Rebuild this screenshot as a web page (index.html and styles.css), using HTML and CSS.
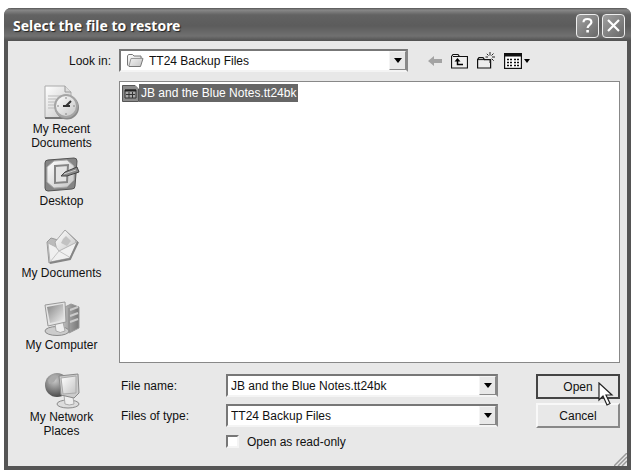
FILE: index.html
```html
<!DOCTYPE html>
<html lang="en">
<head>
  <meta charset="UTF-8">
  <meta name="viewport" content="width=device-width, initial-scale=1.0">
  <title>Select the file to restore</title>
  <link rel="stylesheet" href="styles.css">
</head>
<body>
  <svg class="defs" width="0" height="0" aria-hidden="true">
    <defs>
      <linearGradient id="light" x1="0" y1="0" x2="1" y2="1">
        <stop offset="0" stop-color="#fff"/>
        <stop offset="1" stop-color="#c4c4c4"/>
      </linearGradient>
      <linearGradient id="mid" x1="0" y1="0" x2="1" y2="1">
        <stop offset="0" stop-color="#858585"/>
        <stop offset="1" stop-color="#f0f0f0"/>
      </linearGradient>
      <linearGradient id="side" x1="0" y1="0" x2="1" y2="0">
        <stop offset="0" stop-color="#bbb"/>
        <stop offset="1" stop-color="#777"/>
      </linearGradient>
      <radialGradient id="ball" cx="0.4" cy="0.3" r="0.7">
        <stop offset="0" stop-color="#ccc"/>
        <stop offset="0.5" stop-color="#8c8c8c"/>
        <stop offset="1" stop-color="#4c4c4c"/>
      </radialGradient>
    </defs>
  </svg>

  <main class="dialog">
    <header class="title-bar">
      <h1 class="title">Select the file to restore</h1>
      <button class="title-button" type="button" aria-label="Help">
        <svg width="15" height="17" viewBox="0 0 15 17"><path d="M3.500 5.200C3.500 2.800 5 2 7.400 2s4 1.200 4 3.300c0 2.500-3.800 2.700-3.800 5.700" fill="none" stroke="#fff" stroke-width="2.200"/><rect x="6.300" y="13" width="2.600" height="2.500" fill="#fff"/></svg>
      </button>
      <button class="title-button" type="button" aria-label="Close">
        <svg width="15" height="15" viewBox="0 0 15 15"><path d="M2 2l11 11M13 2L2 13" stroke="#fff" stroke-width="2.200"/></svg>
      </button>
    </header>

    <form class="dialog-body">
      <label class="look-label" for="look-in">Look in:</label>
      <div class="look-row">
        <div class="combo look-combo">
          <svg class="combo-icon" width="18" height="15" viewBox="0 0 18 15"><path d="M1.500 12V3l1-1.500h4L8 3h7v2l2 .5-2.500 8H3z" fill="url(#light)" stroke="#777"/><path d="M3 13l2-7.500h11.500" fill="none" stroke="#999"/></svg>
          <select class="field with-icon" id="look-in">
            <option>TT24 Backup Files</option>
          </select>
          <span class="arrow-box"><svg width="8" height="5" viewBox="0 0 8 5"><path d="M0 0h8L4 5z"/></svg></span>
        </div>
        <div class="tools">
          <button class="tool" type="button" aria-label="Back">
            <svg width="14" height="12" viewBox="0 0 14 12"><path d="M0 6l6-5v3h8v4H6v3z" fill="#a3a3a3"/></svg>
          </button>
          <button class="tool" type="button" aria-label="Up one level">
            <svg width="17" height="16" viewBox="0 0 17 16"><path d="M.5 15V3.500L2 1.500h5l1.500 2h8V15z" fill="#eee" stroke="#111" stroke-width="1.200"/><path d="M2 3.500h6" stroke="#111"/><path d="M3.500 8.500L6.500 5l3 3.500z"/><path d="M6.500 8v3.500H12" fill="none" stroke="#000" stroke-width="1.500"/></svg>
          </button>
          <button class="tool" type="button" aria-label="Create new folder">
            <svg width="18" height="17" viewBox="0 0 18 17"><path d="M.6 16V7.500L2 5.600h4l1.500 2h6.100V16z" fill="#eee" stroke="#111" stroke-width="1.200"/><path d="M1 7.600h7" stroke="#111"/><path d="M13 0v3.500M13 7v4M8.500 5h2.500M15 5h3M9.800 1.800l1.700 1.700M16.500 1.500l-2 2M14.700 6.700l2 2" stroke="#222"/></svg>
          </button>
          <button class="tool" type="button" aria-label="Views">
            <svg width="26" height="16" viewBox="0 0 26 16"><rect x=".6" y=".6" width="16.800" height="14.800" fill="#fff" stroke="#111" stroke-width="1.200"/><path d="M0 2h18" stroke="#111" stroke-width="3"/><path d="M3 6.500h2M6 6.500h2M10 6.500h2M13 6.500h2M3 9.500h2M6 9.500h2M10 9.500h2M13 9.500h2M3 12.500h2M6 12.500h2M10 12.500h2M13 12.500h2" stroke="#111" stroke-width="1.500"/><path d="M20 6h6l-3 4z"/></svg>
          </button>
        </div>
      </div>

      <nav class="places">
        <button class="place" type="button">
          <svg width="36" height="36" viewBox="0 0 36 36"><path d="M1 1h20l6 6v26H1z" fill="url(#light)" stroke="#aaa"/><path d="M21 1v6h6" fill="#ddd" stroke="#999"/><path d="M4 11h13M4 14h8M4 17h7M4 20h6M4 23h7" stroke="#bbb"/><path d="M1 33h26" stroke="#777" stroke-width="2"/><circle cx="23" cy="22.500" r="12" fill="#8a8a8a"/><circle cx="22" cy="21" r="11" fill="url(#light)" stroke="#a5a5a5" stroke-width="2"/><path d="M22 21l5-5M19 21h7" stroke="#333" stroke-width="2"/><path d="M22 12v2M22 28v2M13 21h2M29 21h2" stroke="#888"/></svg>
          <span>My Recent<br>Documents</span>
        </button>
        <button class="place" type="button">
          <svg width="36" height="36" viewBox="0 0 36 36"><path d="M4 3l26-2q3 0 3 3l-2 25q0 3-3 3L4 34q-3 0-3-3L1 6q0-3 3-3z" fill="#858585" stroke="#555"/><path d="M10 4l13-1 7 6v14l-7 7-13 1-7-6V10z" fill="url(#light)" stroke="#aaa"/><path d="M11 9l13-1-1 17-12 1z" fill="#e4e4e4" stroke="#858585" stroke-width="2"/><path d="M17 19l4-4 12-5 2 5-12 4z" fill="#888" stroke="#444"/><path d="M20 17l12-4" stroke="#ccc"/></svg>
          <span>Desktop</span>
        </button>
        <button class="place" type="button">
          <svg width="36" height="36" viewBox="0 0 36 36"><path d="M3 13l4-4 7 2 7-10 13 12-8 17-21 4z" fill="#bbb" stroke="#999"/><path d="M11 13L21 1l11 11-3 9-15 5z" fill="url(#light)" stroke="#aaa"/><path d="M19 10l3-3 5 5-4 5-6-3z" fill="#c2c2c2"/><path d="M4 14l8 4 3 4 18-9-7 16-20 4z" fill="#f0f0f0" stroke="#b5b5b5"/><path d="M6 33l9-11 12 7" fill="none" stroke="#c4c4c4"/><path d="M6 34l20-4 8-17" fill="none" stroke="#858585" stroke-width="2"/></svg>
          <span>My Documents</span>
        </button>
        <button class="place" type="button">
          <svg width="36" height="36" viewBox="0 0 36 36"><path d="M21 6l6-3 8 3v21l-10 5-6-4z" fill="url(#side)" stroke="#999"/><path d="M26 9l8-3M26 15l8-3M26 21l8-3" stroke="#ccc" stroke-width="2"/><path d="M25 7v24" stroke="#888"/><ellipse cx="13" cy="30" rx="12" ry="4.500" fill="#ccc" stroke="#8a8a8a"/><path d="M11 22l8-1 2 9q-5 3-9 0z" fill="#eee" stroke="#aaa"/><path d="M1 4l20-3 1 20-18 4z" fill="#e4e4e4" stroke="#999"/><path d="M3 6l16-3 1 16-14 3z" fill="url(#mid)"/></svg>
          <span>My Computer</span>
        </button>
        <button class="place" type="button">
          <svg width="36" height="36" viewBox="0 0 36 36"><circle cx="13" cy="12" r="12" fill="url(#ball)"/><path d="M4 7q5-5 10-4l-4 6-5 2z" fill="#aaa"/><ellipse cx="24" cy="31" rx="11" ry="4" fill="#ddd" stroke="#8a8a8a"/><path d="M20 22l9 2 1 7q-5 2-9 0z" fill="#eee" stroke="#aaa"/><path d="M15 3l19-2 1 19-5 5-13-3z" fill="#ccc" stroke="#8a8a8a"/><path d="M17 5l15-2v17l-13 1z" fill="url(#light)" stroke="#aaa"/></svg>
          <span>My Network<br>Places</span>
        </button>
      </nav>

      <ul class="file-list">
        <li class="file">
          <svg width="17" height="17" viewBox="0 0 17 17"><path d="M.5.5h13l3 3v13H.5z" fill="#8b8b8b" stroke="#555"/><path d="M13 0l4 4V0z" fill="#fff"/><path d="M3 5h11v8H3z" fill="#aaa" stroke="#333"/><path d="M3 5.500h11" stroke="#222" stroke-width="2"/><path d="M4 9.500h9M7 7v6M10.500 7v6" stroke="#333"/></svg>
          <span class="file-name">JB and the Blue Notes.tt24bk</span>
        </li>
      </ul>

      <div class="bottom">
        <div class="fields">
          <label for="file-name">File name:</label>
          <div class="combo">
            <input class="field" id="file-name" type="text" value="JB and the Blue Notes.tt24bk">
            <button class="arrow-box" type="button" aria-label="Show recent names"><svg width="8" height="5" viewBox="0 0 8 5"><path d="M0 0h8L4 5z"/></svg></button>
          </div>
          <label for="file-type">Files of type:</label>
          <div class="combo">
            <select class="field" id="file-type">
              <option>TT24 Backup Files</option>
            </select>
            <span class="arrow-box"><svg width="8" height="5" viewBox="0 0 8 5"><path d="M0 0h8L4 5z"/></svg></span>
          </div>
          <label class="read-only"><input class="check" type="checkbox"> Open as read-only</label>
        </div>
        <div class="actions">
          <button class="action default" type="submit">Open
            <svg class="pointer" width="16" height="26" viewBox="0 0 16 26"><path d="M1 1v17l4-4 4 9 3-1.500-4-8.500h6z" fill="#fff" stroke="#222" stroke-width="1.200"/></svg>
          </button>
          <button class="action" type="button">Cancel</button>
        </div>
      </div>
    </form>
    <svg class="grip" width="13" height="13" viewBox="0 0 13 13"><path d="M0 13L13 0M4 13l9-9M8 13l5-5" stroke="#999" stroke-width="1.500"/></svg>
  </main>
</body>
</html>
```
FILE: styles.css
```css
* {
  box-sizing: border-box;
}

body {
  margin: 0;
  padding: 8px 0 0 4px;
  min-height: 100vh;
  display: flex;
  background: #fff;
  color: #111;
  font: 12px/14px "Liberation Sans", Arial, sans-serif;
}

button, input, select {
  font: inherit;
  color: inherit;
  margin: 0;
}

svg {
  display: block;
  flex: none;
}

.defs {
  position: absolute;
}

.dialog {
  position: relative;
  flex: 1;
  min-width: 0;
  display: flex;
  flex-direction: column;
  background: #e8e8e8;
  border: 4px solid #555;
  border-top: 0;
  border-radius: 7px 7px 0 0;
}

.title-bar {
  display: flex;
  align-items: center;
  gap: 3px;
  height: 33px;
  margin: 0 -4px;
  padding: 2px 6px 0 9px;
  border-radius: 7px 7px 0 0;
  background: linear-gradient(#555 0, #888 2px, #626262 7px, #5c5c5c 18px, #707070 28px, #505050 33px);
}

.title {
  flex: 1;
  margin: 0;
  color: #fff;
  font: bold 14px/18px "Noto Sans", "Open Sans", sans-serif;
  text-shadow: 1px 1px 1px #222;
}

.title-button {
  display: flex;
  align-items: center;
  justify-content: center;
  width: 23px;
  height: 24px;
  padding: 0;
  border: 1px solid #eee;
  border-radius: 4px;
  background: linear-gradient(135deg, #a0a0a0, #686868);
}

.dialog-body {
  flex: 1;
  display: grid;
  grid-template-columns: 103px minmax(0, 1fr);
  grid-template-rows: 40px 1fr auto;
  column-gap: 8px;
  padding-right: 7px;
}

.look-label {
  justify-self: end;
  padding-top: 13px;
}

.look-row {
  display: flex;
  align-items: center;
  gap: 20px;
  padding-bottom: 1px;
}

.combo {
  position: relative;
  display: flex;
  height: 23px;
  border: 2px solid;
  border-color: #777 #888 #f4f4f4 #777;
  background: #fff;
}

.look-combo {
  flex: 0 1 289px;
}

.combo-icon {
  margin: 2px 0 0 5px;
}

.field {
  flex: 1;
  min-width: 0;
  padding: 0 20px 0 3px;
  border: 0;
  border-radius: 0;
  background: transparent;
  appearance: none;
  outline: 0;
}

.with-icon {
  padding-left: 5px;
}

.arrow-box {
  position: absolute;
  top: 0;
  right: 0;
  display: flex;
  align-items: center;
  justify-content: center;
  width: 17px;
  height: 19px;
  padding: 0;
  border: 1px solid;
  border-color: #f4f4f4 #888 #888 #f4f4f4;
  background: #e8e8e8;
  pointer-events: none;
}

button.arrow-box {
  pointer-events: auto;
}

.tools {
  display: flex;
  align-items: center;
  gap: 9px;
}

.tool {
  padding: 0;
  border: 0;
  background: none;
}

.places {
  grid-row: 2 / 4;
  display: flex;
  flex-direction: column;
  padding-top: 4px;
}

.place {
  display: flex;
  flex-direction: column;
  align-items: center;
  min-height: 72px;
  padding: 0 0 0 4px;
  border: 0;
  background: none;
  text-align: center;
}

.place span {
  padding-top: 1px;
}

.file-list {
  margin: 0;
  padding: 2px;
  list-style: none;
  background: #fff;
  border: 1px solid #888;
}

.file {
  display: flex;
  align-items: center;
}

.file-name {
  padding: 2px;
  background: #666;
  color: #fff;
}

.bottom {
  display: flex;
  justify-content: space-between;
  gap: 38px;
  padding: 11px 0 17px 2px;
}

.fields {
  flex: 1;
  display: grid;
  grid-template-columns: 105px minmax(0, 1fr);
  align-items: center;
  row-gap: 7px;
}

.read-only {
  grid-column: 2;
  display: flex;
  align-items: center;
  gap: 8px;
  height: 15px;
}

.check {
  width: 13px;
  height: 13px;
  appearance: none;
  background: #fff;
  border: 2px solid;
  border-color: #777 #f4f4f4 #f4f4f4 #777;
}

.actions {
  display: flex;
  flex-direction: column;
  gap: 4px;
}

.action {
  position: relative;
  width: 84px;
  height: 25px;
  padding: 0;
  border: 2px solid;
  border-color: #f8f8f8 #888 #888 #f8f8f8;
  background: #e8e8e8;
}

.default {
  border-color: #444;
}

.pointer {
  position: absolute;
  top: 6px;
  right: 4px;
  z-index: 1;
}

.default {
  z-index: 1;
}

.grip {
  position: absolute;
  right: 0;
  bottom: 0;
}
```
